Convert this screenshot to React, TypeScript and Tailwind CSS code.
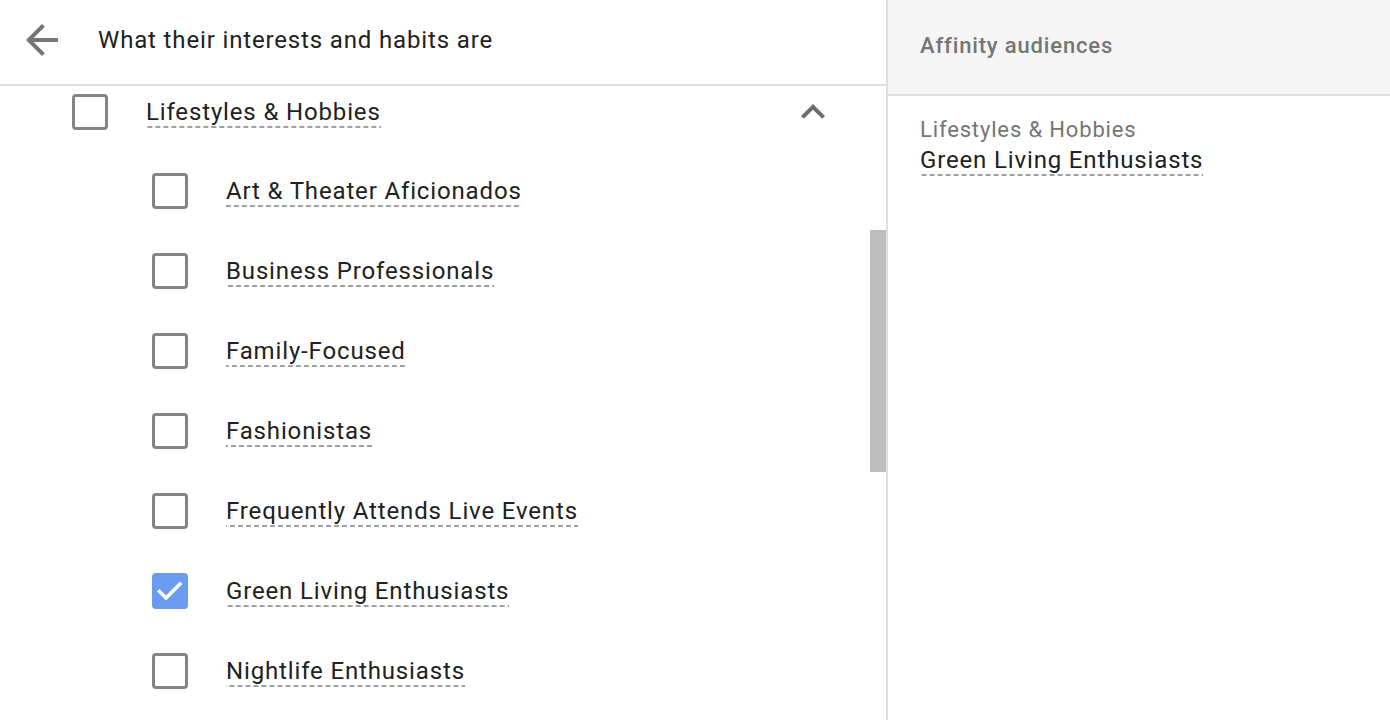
import React from 'react';

const ITEMS: { label: string; checked?: boolean }[] = [
  { label: 'Art & Theater Aficionados' },
  { label: 'Business Professionals' },
  { label: 'Family-Focused' },
  { label: 'Fashionistas' },
  { label: 'Frequently Attends Live Events' },
  { label: 'Green Living Enthusiasts', checked: true },
  { label: 'Nightlife Enthusiasts' },
];

const Checkbox: React.FC<{ checked?: boolean }> = ({ checked }) =>
  checked ? (
    <span className="flex h-[36px] w-[36px] shrink-0 items-center justify-center rounded-[4px] bg-[#6a9bf0]">
      <svg width="36" height="36" viewBox="0 0 36 36" fill="none">
        <path d="M7.5 18.5l6.5 6.5 14-14" stroke="#ffffff" strokeWidth="3.6" strokeLinecap="square" />
      </svg>
    </span>
  ) : (
    <span className="block h-[36px] w-[36px] shrink-0 rounded-[4px] border-[3px] border-[#858585] bg-white" />
  );

// dashed underline drawn as a repeating gradient so the dash length matches
const Label: React.FC<{ children: React.ReactNode }> = ({ children }) => (
  <span className="bg-[linear-gradient(to_right,#9aa0a6_62%,transparent_0)] bg-[length:8px_2px] bg-bottom bg-repeat-x pb-[2px] text-[24px] leading-[28px] tracking-[0.85px] text-[#212121]">
    {children}
  </span>
);

export default function App() {
  return (
    <div
      className="flex h-[720px] w-[1390px] overflow-hidden bg-white"
      style={{ fontFamily: 'Roboto, "Noto Sans", sans-serif' }}
    >
      {/* left: picker */}
      <div className="flex w-[888px] shrink-0 flex-col border-r-2 border-[#e0e0e0]">
        <div className="flex h-[86px] shrink-0 items-center border-b-2 border-[#e0e0e0] pb-[4px] pl-[18px]">
          <svg width="48" height="48" viewBox="0 0 24 24" fill="#757575">
            <path d="M20 11H7.83l5.59-5.59L12 4l-8 8 8 8 1.41-1.41L7.83 13H20v-2z" />
          </svg>
          <span className="ml-[32px] text-[24px] leading-[28px] tracking-[0.85px] text-[#212121]">
            What their interests and habits are
          </span>
        </div>

        <div className="relative flex-1">
          <div className="flex h-[52px] items-center pl-[72px] pr-[49px]">
            <Checkbox />
            <span className="ml-[38px]">
              <Label>Lifestyles &amp; Hobbies</Label>
            </span>
            <svg className="ml-auto" width="48" height="48" viewBox="0 0 24 24" fill="#6d6d6d">
              <path d="M12 8l-6 6 1.41 1.41L12 10.83l4.59 4.58L18 14z" />
            </svg>
          </div>

          <div className="pt-[13px]">
            {ITEMS.map((item) => (
              <div key={item.label} className="flex h-[80px] items-center pl-[152px]">
                <Checkbox checked={item.checked} />
                <span className="ml-[38px]">
                  <Label>{item.label}</Label>
                </span>
              </div>
            ))}
          </div>

          {/* scrollbar thumb */}
          <div className="absolute right-0 top-[144px] h-[242px] w-[16px] bg-[#bdbdbd]" />
        </div>
      </div>

      {/* right: selection summary */}
      <div className="flex flex-1 flex-col">
        <div className="flex h-[96px] shrink-0 items-center border-b-2 border-[#e0e0e0] bg-[#f5f5f5] pb-[2px] pl-[32px]">
          <span className="text-[22px] font-medium leading-[26px] tracking-[0.85px] text-[#757575]">
            Affinity audiences
          </span>
        </div>
        <div className="flex flex-col items-start pl-[32px] pt-[21px]">
          <span className="text-[22px] leading-[26px] tracking-[0.85px] text-[#757575]">Lifestyles &amp; Hobbies</span>
          <span className="mt-[3px]">
            <Label>Green Living Enthusiasts</Label>
          </span>
        </div>
      </div>
    </div>
  );
}
